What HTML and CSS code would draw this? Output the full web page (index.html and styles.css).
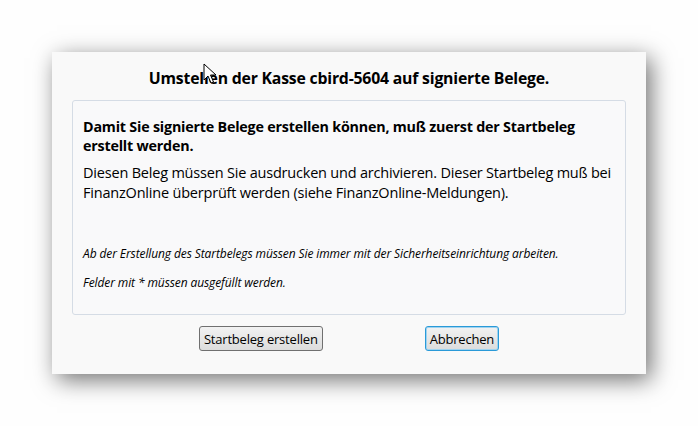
FILE: index.html
```html
<!DOCTYPE html>
<html lang="de">
<head>
<meta charset="utf-8">
<link rel="stylesheet" href="styles.css">
</head>
<body>
<div class="dialog">
  <h1 class="title">Umstellen der Kasse cbird-5604 auf signierte Belege.</h1>
  <div class="box">
    <p class="lead">Damit Sie signierte Belege erstellen können, muß zuerst der Startbeleg erstellt werden.</p>
    <p class="text">Diesen Beleg müssen Sie ausdrucken und archivieren. Dieser Startbeleg muß bei FinanzOnline überprüft werden (siehe FinanzOnline-Meldungen).</p>
    <p class="note first">Ab der Erstellung des Startbelegs müssen Sie immer mit der Sicherheitseinrichtung arbeiten.</p>
    <p class="note">Felder mit * müssen ausgefüllt werden.</p>
  </div>
  <div class="buttons">
    <button class="btn">Startbeleg erstellen</button>
    <button class="btn focused">Abbrechen</button>
  </div>
</div>
<svg class="cursor" width="14" height="22" viewBox="0 0 14 22"><path d="M1 1 L1 17 L5 13 L8 20 L10.5 19 L7.5 12 L13 12 Z" fill="#fff" stroke="#000" stroke-width="1" stroke-linejoin="round"/></svg>
</body>
</html>
```
FILE: styles.css
```css
html, body { margin: 0; padding: 0; }
body {
  background: #fefefe;
  width: 698px;
  height: 426px;
  position: relative;
  overflow: hidden;
  font-family: "Open Sans", "Noto Sans", sans-serif;
  color: #000;
}
.dialog {
  position: absolute;
  left: 52px;
  top: 52px;
  width: 594px;
  height: 322px;
  box-sizing: border-box;
  background: #f9f9f9;
  box-shadow: 5px 6px 22px rgba(0,0,0,0.55);
  padding: 15px 20px 0 20px;
  display: flex;
  flex-direction: column;
}
.title {
  margin: 0;
  font-size: 15.8px;
  font-weight: bold;
  text-align: center;
  line-height: 23px;
  letter-spacing: -0.2px;
}
.box {
  margin-top: 10px;
  height: 215px;
  box-sizing: border-box;
  border: 1px solid #d5dce5;
  border-radius: 3px;
  background: #f9f9fa;
  padding: 16px 10px 0 10px;
}
.lead {
  margin: 0;
  font-size: 14.3px;
  font-weight: bold;
  line-height: 19px;
  letter-spacing: -0.2px;
}
.text {
  margin: 8px 0 0 0;
  font-size: 14.5px;
  line-height: 20px;
  letter-spacing: -0.2px;
}
.note {
  margin: 10px 0 0 0;
  font-size: 12px;
  font-style: italic;
  line-height: 19px;
  letter-spacing: -0.1px;
}
.note.first { margin-top: 41px; }
.buttons {
  display: flex;
  justify-content: center;
  gap: 102px;
  margin-top: 11px;
}
.btn {
  font-family: "Open Sans", "Noto Sans", sans-serif;
  font-size: 13px;
  height: 25px;
  padding: 0 4px;
  border: 1px solid #707070;
  border-radius: 3px;
  background: linear-gradient(#f2f2f2, #dcdcdc);
  color: #000;
  letter-spacing: -0.2px;
}
.btn.focused {
  border-color: #2a9ad8;
  box-shadow: inset 0 0 0 1px #9fd3f0;
}
.cursor {
  position: absolute;
  left: 203px;
  top: 63px;
}
```
